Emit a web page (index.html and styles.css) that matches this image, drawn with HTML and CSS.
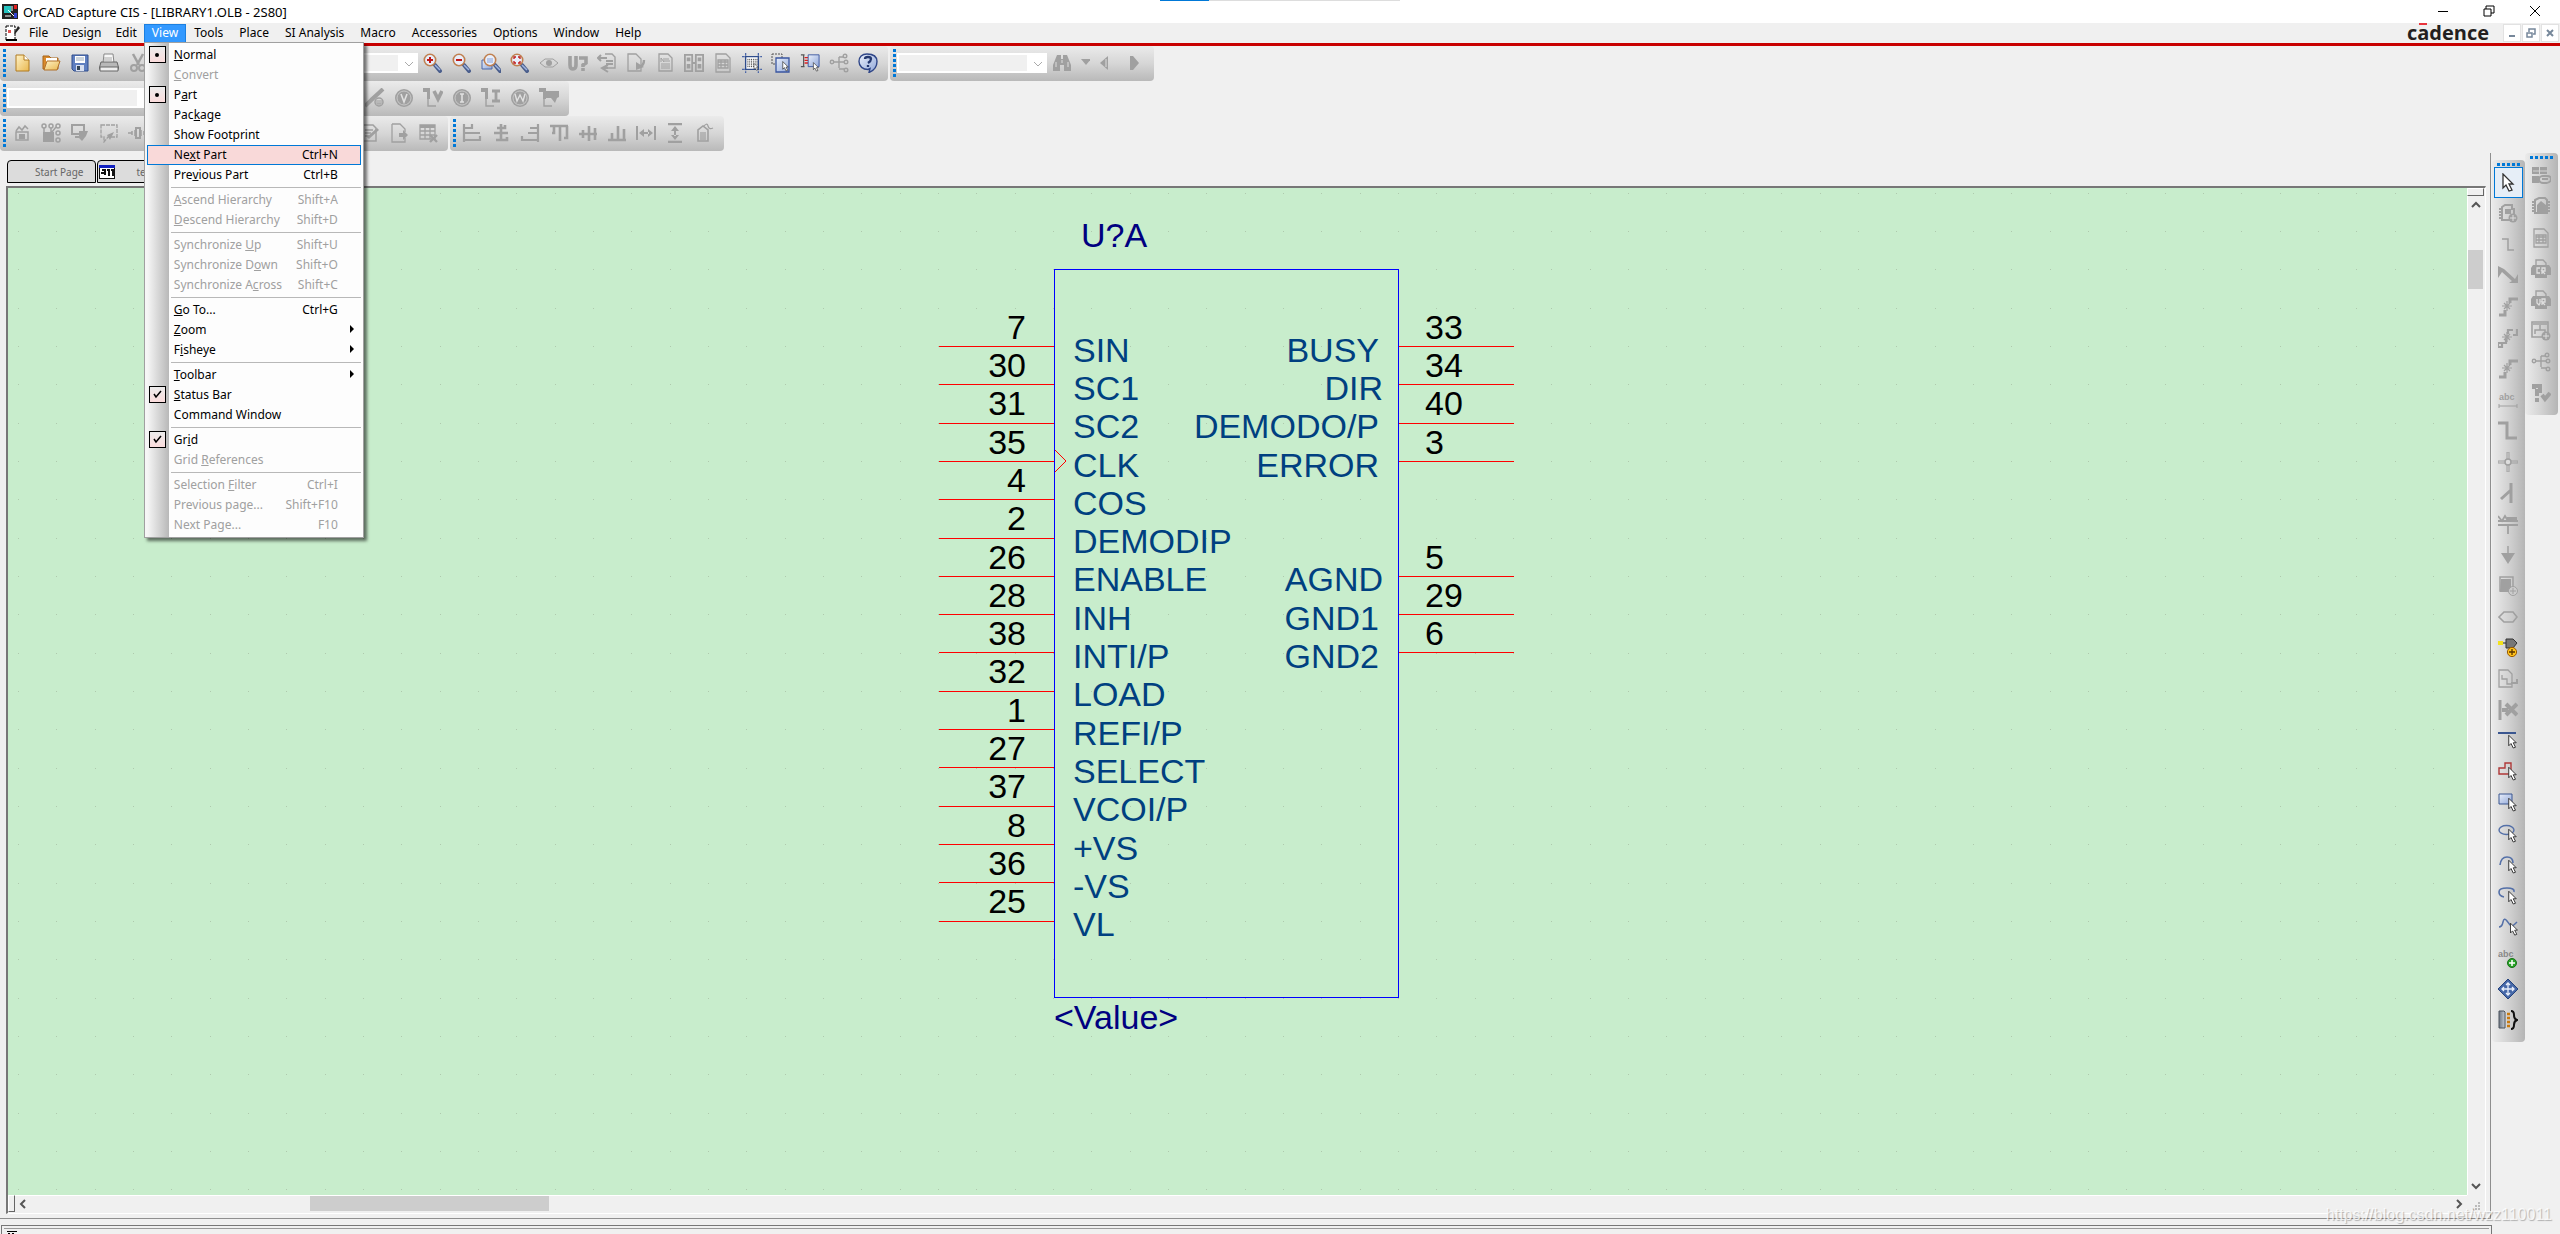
FILE: index.html
```html
<!DOCTYPE html>
<html lang="en">
<head>
<meta charset="utf-8">
<title>OrCAD Capture CIS - [LIBRARY1.OLB - 2S80]</title>
<link rel="stylesheet" href="styles.css">
</head>
<body>
<svg class="defs" aria-hidden="true">
  <defs>
    <linearGradient id="blue" x1="0" y1="0" x2="1" y2="1"><stop offset="0" stop-color="#eaf0fb"/><stop offset="1" stop-color="#8fa6d8"/></linearGradient>
    <linearGradient id="gold" x1="0" y1="0" x2="1" y2="1"><stop offset="0" stop-color="#fff3c8"/><stop offset="1" stop-color="#e9b850"/></linearGradient>
    <linearGradient id="steel" x1="0" y1="0" x2="1" y2="0"><stop offset="0" stop-color="#6f7884"/><stop offset="1" stop-color="#c4cbd3"/></linearGradient>
  </defs>
  <symbol id="cursor" viewBox="0 0 20 20"><path d="M5 1v14l3-3 3 6 3-1-3-6h4z" fill="#fff" stroke="#333" stroke-width="1.3"/></symbol>
  <symbol id="lens" viewBox="0 0 20 20"><path d="M12 12l5 6" stroke="#4a5e8c" stroke-width="4" stroke-linecap="round"/><path d="M12 12l5 5" stroke="#9fb4e0" stroke-width="1.5"/><circle cx="7" cy="7" r="5.7" fill="#e8eefa" stroke="#c08050" stroke-width="1.6"/></symbol>
  <symbol id="new" viewBox="0 0 20 20"><path d="M4 2h8l5 5v11H4z" fill="url(#gold)" stroke="#b07a20"/><path d="M12 2v5h5" fill="#fff" stroke="#b07a20"/></symbol>
  <symbol id="open" viewBox="0 0 20 20"><path d="M2 3h6l2 2h7v11H2z" fill="#d98a2c" stroke="#a86418"/><path d="M5 5h11v5H5z" fill="#fff"/><path d="M6 8h13l-3 9H3z" fill="url(#gold)" stroke="#b0702a"/></symbol>
  <symbol id="save" viewBox="0 0 20 20"><path d="M2 2h16v16H4l-2-2z" fill="#5f7fc0" stroke="#2f4d8c"/><path d="M5 3h10v7H5z" fill="#fff"/><path d="M6 5h8M6 7h8" stroke="#9ab" /><path d="M6 12h8v6H6z" fill="#d7dff0"/><path d="M7 13h3v4H7z" fill="#345"/></symbol>
  <symbol id="print" viewBox="0 0 20 20"><path d="M5 1h9l1 9H4z" fill="#f6f6f6" stroke="#888"/><path d="M2 9h16l2 7H0z" fill="#b8b8b8" stroke="#666"/><path d="M1 14h18v4H1z" fill="#eee" stroke="#666"/><path d="M5 5h8M5 7h8" stroke="#aaa"/></symbol>
  <symbol id="cut" viewBox="0 0 20 20"><path d="M5 1l6 11M15 1L9 12" stroke="currentColor" stroke-width="2.5"/><circle cx="6" cy="15" r="3" fill="none" stroke="currentColor" stroke-width="2"/><circle cx="14" cy="15" r="3" fill="none" stroke="currentColor" stroke-width="2"/></symbol>
  <symbol id="zin" viewBox="0 0 20 20"><use href="#lens"/><path d="M7 4v6M4 7h6" stroke="#c01818" stroke-width="2"/></symbol>
  <symbol id="zout" viewBox="0 0 20 20"><use href="#lens"/><path d="M4 7h6" stroke="#c01818" stroke-width="2"/></symbol>
  <symbol id="zarea" viewBox="0 0 20 20"><path d="M1 7h10v9H1z" fill="url(#blue)" stroke="#4a66a8"/><g transform="translate(2 0)"><use href="#lens" width="20" height="20"/></g><path d="M6 5h6v5H6z" fill="#b8c8ea"/></symbol>
  <symbol id="zall" viewBox="0 0 20 20"><use href="#lens"/><path d="M4 6V4h2M8 4h2v2M10 8v2H8M6 10H4V8" fill="none" stroke="#c01818" stroke-width="1.3"/></symbol>
  <symbol id="eye" viewBox="0 0 20 20"><path d="M1 10l5-4h8l5 4-5 4H6z" fill="none" stroke="currentColor"/><circle cx="10" cy="10" r="3" fill="currentColor"/></symbol>
  <symbol id="uq" viewBox="0 0 20 20"><path d="M2 3v9q0 4 3 4t3-4V3M11 5h7v5l-3 2v2M15 15v3" fill="none" stroke="currentColor" stroke-width="3.600"/></symbol>
  <symbol id="pageback" viewBox="0 0 20 20"><path d="M8 1h7l3 3v11H8" fill="none" stroke="currentColor" stroke-width="1.4"/><path d="M1 5h9M4 2L1 5l3 3M5 15h6M11 12l-6 3 6 4M9 8h7M9 11h7" fill="none" stroke="currentColor" stroke-width="2"/></symbol>
  <symbol id="pagedown" viewBox="0 0 20 20"><path d="M2 1h8l5 5v12H2z" fill="none" stroke="currentColor" stroke-width="1.3"/><path d="M18 7q0 5-4 7" fill="none" stroke="currentColor" stroke-width="2.4"/><path d="M10 9v8l8-3z" fill="currentColor"/></symbol>
  <symbol id="notes" viewBox="0 0 20 20"><path d="M4 1h9l4 4v13H4z" fill="none" stroke="currentColor" stroke-width="1.3"/><path d="M6 9V5l3 4V5M10 6h4M10 8h5M6 11h9M6 13h9M6 15h9" fill="none" stroke="currentColor"/></symbol>
  <symbol id="twins" viewBox="0 0 22 20"><path d="M1 1h8v18H1zM13 1h8v18h-8z" fill="none" stroke="currentColor" stroke-width="2"/><path d="M3 4h4v4H3zM3 11h4v5H3zM15 4h4v4h-4zM15 11h4v5h-4zM9 9h4v2H9z" fill="currentColor"/></symbol>
  <symbol id="sheet" viewBox="0 0 20 20"><path d="M3 1h10l4 4v14H3z" fill="none" stroke="currentColor" stroke-width="1.3"/><path d="M5 7h10v8H5zM5 9h10M5 12h10M8 7v8M12 7v8" fill="none" stroke="currentColor" stroke-width="1.3"/></symbol>
  <symbol id="grid" viewBox="0 0 22 22"><path d="M4 0v22M18 0v22M0 4h22M0 18h22" stroke="#4a66a8" stroke-width="1.4" stroke-dasharray="3 1"/><path d="M4 4h14v14H4z" fill="#fff" stroke="#2f4d8c" stroke-width="1.5"/><path d="M6 7h11M6 9h11M6 11h11M6 13h11M6 15h11" stroke="#111" stroke-dasharray="1 1"/><use href="#cursor" x="11" y="11" width="9" height="9"/></symbol>
  <symbol id="selarea" viewBox="0 0 20 20"><path d="M1 1h10v10H1z" fill="none" stroke="#555" stroke-dasharray="2 1"/><path d="M5 5h13v14H5z" fill="url(#blue)" stroke="#3a56a0" stroke-width="1.3"/><use href="#cursor" x="9" y="8" width="11" height="11"/></symbol>
  <symbol id="pins" viewBox="0 0 22 20"><path d="M1 1h4M4 1v13M1 14h4" fill="none" stroke="#555" stroke-width="1.3"/><path d="M5 4h4M5 7h4M5 10h4" stroke="#e02020" stroke-width="1.4"/><path d="M9 1h12v13H9z" fill="url(#blue)" stroke="#3a56a0"/><use href="#cursor" x="12" y="9" width="11" height="11"/></symbol>
  <symbol id="tree" viewBox="0 0 20 20"><path d="M4 9h6M10 4v11M10 4h4M10 9h5M10 16h5" fill="none" stroke="currentColor" stroke-width="1.4"/><g fill="none" stroke="currentColor" stroke-width="1.4"><circle cx="3" cy="9" r="1.7"/><circle cx="16" cy="3" r="1.8"/><circle cx="17" cy="9" r="1.8"/><circle cx="17" cy="17" r="1.8"/></g></symbol>
  <symbol id="help" viewBox="0 0 20 20"><path d="M9 1C4 1 1 4 1 8.500c0 5 4 8 9 8l2-1-1 4c5-2 8-6 8-11S15 1 9 1z" fill="url(#blue)" stroke="#2f4688" stroke-width="1.4"/><path d="M7 6q0-2 3-2t3 2-3 4M10 12v2" fill="none" stroke="#24386f" stroke-width="2.300"/></symbol>
  <symbol id="bino" viewBox="0 0 20 20"><path d="M5 2h4v4h2V2h4l4 10v6h-7v-6H8v6H1v-6z" fill="currentColor"/><path d="M4 9v5M16 9v5M10 7v3" stroke="#ddd"/></symbol>
  <symbol id="down" viewBox="0 0 20 20"><path d="M5 6h10l-5 6z" fill="currentColor"/></symbol>
  <symbol id="prev" viewBox="0 0 20 20"><path d="M13 3v14l-8-7z" fill="currentColor"/><path d="M11 6v8" stroke="#ddd"/></symbol>
  <symbol id="next" viewBox="0 0 20 20"><path d="M6 3h3l6 7-6 7H6z" fill="currentColor"/></symbol>
  <symbol id="probe" viewBox="0 0 20 20"><path d="M0 18L18 1M6 12l10-9" stroke="currentColor" stroke-width="4"/><circle cx="14" cy="14" r="4" fill="none" stroke="currentColor" stroke-width="1.5"/><path d="M12 12v4h4v-4M14 12v4" fill="none" stroke="currentColor"/></symbol>
  <symbol id="disc" viewBox="0 0 20 20"><circle cx="10" cy="10" r="9" fill="currentColor"/><circle cx="10" cy="10" r="7" fill="none" stroke="#c8c8c8"/></symbol>
  <symbol id="cv" viewBox="0 0 20 20"><use href="#disc"/><path d="M7 6l3 8 3-8" fill="none" stroke="#e0e0e0" stroke-width="1.6"/></symbol>
  <symbol id="ci" viewBox="0 0 20 20"><use href="#disc"/><path d="M8 6h4M10 6v8M8 14h4" fill="none" stroke="#e0e0e0" stroke-width="1.600"/></symbol>
  <symbol id="cw" viewBox="0 0 20 20"><use href="#disc"/><path d="M5 6l2 7 3-6 3 6 2-7" fill="none" stroke="#e0e0e0" stroke-width="1.4"/></symbol>
  <symbol id="pen" viewBox="0 0 20 20"><path d="M0 0h7v11H4V4H0z" fill="currentColor"/><path d="M5 11v7h8" fill="none" stroke="currentColor" stroke-width="1.400"/></symbol>
  <symbol id="pv" viewBox="0 0 20 20"><use href="#pen"/><path d="M11 3l4 8 4-8" fill="none" stroke="currentColor" stroke-width="3.600"/></symbol>
  <symbol id="pi" viewBox="0 0 20 20"><use href="#pen"/><path d="M11 3h8M15 3v10M11 13h8" fill="none" stroke="currentColor" stroke-width="2.800"/></symbol>
  <symbol id="pw" viewBox="0 0 20 20"><use href="#pen"/><path d="M7 3h13v6l-2 1-2 5-4-5H7z" fill="currentColor"/></symbol>
  <symbol id="basket" viewBox="0 0 20 20"><path d="M4 8l3-4 3 3 3-4 3 3M4 9h12v8H4z" fill="none" stroke="currentColor" stroke-width="1.5"/><path d="M7 11h6v5H7z" fill="currentColor"/></symbol>
  <symbol id="parts" viewBox="0 0 20 20"><path d="M2 9h11v10H2z" fill="currentColor"/><g fill="none" stroke="currentColor" stroke-width="1.5"><circle cx="3" cy="3" r="2"/><circle cx="10" cy="3" r="2"/><circle cx="17" cy="3" r="2"/><circle cx="17" cy="10" r="2"/><circle cx="17" cy="17" r="2"/><path d="M3 5v4M10 5v4M15 4l-4 5"/></g></symbol>
  <symbol id="board" viewBox="0 0 20 20"><path d="M2 2h12v9H2zM5 14h8" fill="none" stroke="currentColor" stroke-width="2"/><path d="M9 8h9l-2 5-4 5-3-3z" fill="currentColor"/></symbol>
  <symbol id="board2" viewBox="0 0 20 20"><path d="M2 2h16v12H9l-4 5V14H2z" fill="none" stroke="currentColor" stroke-dasharray="4 1" stroke-width="1.300"/><path d="M8 12l7-3-4 8z" fill="currentColor"/></symbol>
  <symbol id="coil" viewBox="0 0 20 20"><path d="M0 10h4M16 10h4M4 8v4M7 7v6M13 7v6M16 8v4" stroke="currentColor" stroke-width="1.5"/><path d="M8 5h4v10H8z" fill="none" stroke="currentColor" stroke-width="2"/></symbol>
  <symbol id="edit" viewBox="0 0 20 20"><path d="M3 2h10l3 3v13H3z" fill="none" stroke="currentColor" stroke-width="1.5"/><path d="M5 7h8M5 10h6M5 13h4" stroke="currentColor" stroke-width="1.5"/><path d="M8 15l10-9" stroke="currentColor" stroke-width="3"/></symbol>
  <symbol id="export" viewBox="0 0 20 20"><path d="M3 1h8l5 5v3M16 15v4H3V1" fill="none" stroke="currentColor" stroke-width="1.3"/><path d="M10 10h4V7l5 5-5 5v-3h-4z" fill="currentColor"/></symbol>
  <symbol id="tablex" viewBox="0 0 20 20"><path d="M2 2h15v14H2zM2 8h15M2 12h15M7 4v12M12 4v12" fill="none" stroke="currentColor" stroke-width="1.3"/><path d="M2 2h15v3H2z" fill="currentColor"/><path d="M12 12l7 7M19 12l-7 7" stroke="currentColor" stroke-width="2.400"/></symbol>
  <symbol id="al" viewBox="0 0 20 20"><path d="M2 1v18M2 5h8V1M2 10h16M2 17h16v-4" fill="none" stroke="currentColor" stroke-width="2.200"/></symbol>
  <symbol id="ac" viewBox="0 0 20 20"><path d="M10 1v17M6 5h8V2M3 10h14M5 17h11v-3" fill="none" stroke="currentColor" stroke-width="2.600"/></symbol>
  <symbol id="ar" viewBox="0 0 20 20"><path d="M18 1v18M18 5h-8M18 10H8M18 17H2v-4" fill="none" stroke="currentColor" stroke-width="2.200"/></symbol>
  <symbol id="at" viewBox="0 0 20 20"><path d="M1 3h18M5 3v7H3M11 3v15M18 3v12h-3" fill="none" stroke="currentColor" stroke-width="2.600"/></symbol>
  <symbol id="am" viewBox="0 0 20 20"><path d="M1 11h18M5 7v8M11 3v15M17 5v12" fill="none" stroke="currentColor" stroke-width="2.600"/></symbol>
  <symbol id="ab" viewBox="0 0 20 20"><path d="M1 17h18M5 10v7M11 3v14M17 6v11" fill="none" stroke="currentColor" stroke-width="2.600"/></symbol>
  <symbol id="dh" viewBox="0 0 20 20"><path d="M1 3v14M19 3v14" stroke="currentColor" stroke-width="2"/><path d="M3 10l5-4v8zM17 10l-5-4v8zM7 9h6v2H7z" fill="currentColor"/></symbol>
  <symbol id="dv" viewBox="0 0 20 20"><path d="M3 1h14M3 19h14" stroke="currentColor" stroke-width="2.400"/><path d="M10 3l4 5H6zM10 17l4-5H6zM9 7h2v6H9z" fill="currentColor"/></symbol>
  <symbol id="tag" viewBox="0 0 20 20"><path d="M4 18V7l5-4 5 4v11z" fill="none" stroke="currentColor" stroke-width="1.600"/><path d="M7 9v8M9 9v8M11 9v8M9 4q4-5 5-1t5 2" fill="none" stroke="currentColor" stroke-width="1.200"/></symbol>
  <symbol id="chip" viewBox="0 0 20 20"><path d="M4 3l3-2h7v4h2v11H4z" fill="none" stroke="currentColor" stroke-width="2"/><path d="M1 5h3M1 8h3M1 11h3M1 14h3" stroke="currentColor" stroke-width="2"/><path d="M7 5h6v5H7z" fill="currentColor"/><circle cx="15" cy="14" r="4.500" fill="currentColor"/><path d="M15 11v6M12 14h6" stroke="#ddd"/></symbol>
  <symbol id="chip2" viewBox="0 0 20 20"><path d="M4 3l4-2h6l2 2v13H4z" fill="none" stroke="currentColor" stroke-width="2"/><path d="M1 5h3M1 8h3M1 11h3M1 14h3M16 5h3M16 8h3M16 11h3M16 14h3" stroke="currentColor" stroke-width="2"/><path d="M6 17V8l4-4 5 4v9z" fill="currentColor"/></symbol>
  <symbol id="wire" viewBox="0 0 20 20"><path d="M4 4h6v11h6" fill="none" stroke="currentColor" stroke-width="1.5"/></symbol>
  <symbol id="bus" viewBox="0 0 20 20"><path d="M0 0v12l4-6 10 9-3 2h9V8l-3 5L6 3z" fill="currentColor"/></symbol>
  <symbol id="auto" viewBox="0 0 20 20"><path d="M12 6V2h8M1 18h6v-5" fill="none" stroke="currentColor" stroke-width="3"/><path d="M9 4v10M4 9h10M6 6l6 6M12 6l-6 6" stroke="currentColor" stroke-width="1.200"/></symbol>
  <symbol id="auto2" viewBox="0 0 20 20"><path d="M10 6V2h5M15 7h4V1M0 19h4v-4H0zM5 15h3v-4" fill="none" stroke="currentColor" stroke-width="2.200"/><path d="M9 4v10M4 9h10M6 6l6 6M12 6l-6 6" stroke="currentColor" stroke-width="1.200"/></symbol>
  <symbol id="busent" viewBox="0 0 20 20"><path d="M0 2h9v15h10" fill="none" stroke="currentColor" stroke-width="3"/></symbol>
  <symbol id="junction" viewBox="0 0 20 20"><path d="M9 0h2v20H9zM0 9h20v2H0z" fill="none" stroke="currentColor"/><circle cx="10" cy="10" r="3" fill="#ddd" stroke="currentColor" stroke-width="1.5"/></symbol>
  <symbol id="entry" viewBox="0 0 20 20"><path d="M13 0v20M3 16l10-9" stroke="currentColor" stroke-width="3"/></symbol>
  <symbol id="vcc" viewBox="0 0 20 20"><path d="M0 2l4 5 3-5 3 5M0 11h20M10 10v10M0 7h20" fill="none" stroke="currentColor" stroke-width="1.800"/><path d="M9 3h10v5H9z" fill="currentColor"/></symbol>
  <symbol id="gnd" viewBox="0 0 20 20"><path d="M10 1v8" stroke="currentColor" stroke-width="1.500"/><path d="M3 8h14l-7 11z" fill="currentColor"/></symbol>
  <symbol id="block" viewBox="0 0 20 20"><path d="M2 1h13v14H2z" fill="none" stroke="currentColor" stroke-width="1.500"/><path d="M3 3h10v13H2z" fill="currentColor"/><circle cx="15" cy="15" r="4.500" fill="#ccc" stroke="currentColor"/><path d="M15 12v6M12 15h6" stroke="currentColor"/></symbol>
  <symbol id="port" viewBox="0 0 20 20"><path d="M1 10l5-5h9l4 5-4 5H6z" fill="none" stroke="currentColor" stroke-width="1.600"/></symbol>
  <symbol id="gate" viewBox="0 0 20 20"><path d="M0 3h5v4H0z" fill="#f2e21c"/><path d="M5 5h3" stroke="#222"/><path d="M8 1h7l4 4-4 5H8z" fill="#777" stroke="#333"/><circle cx="14" cy="14" r="4.600" fill="#ffc21a" stroke="#9a5a00"/><path d="M14 11v6M11 14h6" stroke="#5a3400" stroke-width="1.300"/></symbol>
  <symbol id="offpage" viewBox="0 0 20 20"><path d="M1 1h9l4 4v13H1zM4 6v4h5v5h5" fill="none" stroke="currentColor" stroke-width="1.300"/><path d="M13 14h6v-4" fill="none" stroke="currentColor" stroke-width="2"/></symbol>
  <symbol id="nc" viewBox="0 0 20 20"><path d="M2 0v20" stroke="currentColor" stroke-width="3"/><path d="M4 10h6M8 4l11 11M19 4L8 15" stroke="currentColor" stroke-width="4"/></symbol>
  <symbol id="gline" viewBox="0 0 20 20"><path d="M0 1h18v2H0z" fill="#3a5690"/><use href="#cursor" x="7" y="3" width="15" height="16"/></symbol>
  <symbol id="gpoly" viewBox="0 0 20 20"><path d="M1 12V6h6V1h6v11z" fill="none" stroke="#b03838" stroke-width="1.400"/><use href="#cursor" x="7" y="4" width="15" height="16"/></symbol>
  <symbol id="grect" viewBox="0 0 20 20"><path d="M1 1h13v10H1z" fill="url(#blue)" stroke="#3a5690"/><use href="#cursor" x="7" y="4" width="15" height="16"/></symbol>
  <symbol id="gell" viewBox="0 0 20 20"><ellipse cx="8.500" cy="6" rx="7.500" ry="4.500" fill="none" stroke="#5470a8" stroke-width="1.400"/><use href="#cursor" x="7" y="4" width="15" height="16"/></symbol>
  <symbol id="garc" viewBox="0 0 20 20"><path d="M2 10Q3 2 9 2t6 6" fill="none" stroke="#5470a8" stroke-width="1.600"/><use href="#cursor" x="7" y="4" width="15" height="16"/></symbol>
  <symbol id="gearc" viewBox="0 0 20 20"><path d="M6 11Q1 10 1 6t8-4 7 4" fill="none" stroke="#5470a8" stroke-width="1.600"/><use href="#cursor" x="7" y="4" width="15" height="16"/></symbol>
  <symbol id="gbez" viewBox="0 0 20 20"><path d="M1 10q3 0 4-5t4-1 4 5 6-4" fill="none" stroke="#5470a8" stroke-width="1.500"/><use href="#cursor" x="9" y="5" width="14" height="15"/></symbol>
  <symbol id="gmove" viewBox="0 0 20 20"><path d="M10 0l10 10-10 10L0 10z" fill="#4668a8" stroke="#24427c"/><path d="M10 4v12M4 10h12M8 6l2-2 2 2M8 14l2 2 2-2M6 8l-2 2 2 2M14 8l2 2-2 2" fill="none" stroke="#e8eefa" stroke-width="1.300"/></symbol>
  <symbol id="garray" viewBox="0 0 20 20"><path d="M1 1h5l1 1v16H1z" fill="url(#steel)" stroke="#4a525c"/><path d="M9 4h3M9 8h3M9 12h3M9 16h3" stroke="#c87a10" stroke-width="2.500"/><path d="M13 1q3 0 3 4t3 5q-3 1-3 5t-3 4" fill="none" stroke="#111" stroke-width="2"/></symbol>
  <symbol id="link" viewBox="0 0 20 20"><path d="M1 1h7v7H1zM9 1h7v7H9zM1 10h7v7H1z" fill="currentColor"/><path d="M2 5h14" stroke="#d4d4d4"/><path d="M8 13q0-3 4-3h4q4 0 4 3t-4 4h-4q-4 0-4-4zM11 13h6" fill="none" stroke="currentColor" stroke-width="1.800"/></symbol>
  <symbol id="prn" viewBox="0 0 20 20"><path d="M5 7V1h7l3 3v3" fill="none" stroke="currentColor" stroke-width="1.400"/><path d="M2 6h16l2 3v7h-4v3H4v-3H0V9z" fill="currentColor"/></symbol>
  <symbol id="cr" viewBox="0 0 20 20"><use href="#prn"/><path d="M9 9H6v5h3M11 15V9h3v3h-3l3 3" fill="none" stroke="#dedede" stroke-width="1.300"/></symbol>
  <symbol id="vr" viewBox="0 0 20 20"><use href="#prn"/><path d="M6 9v4l2 2 1-2V9M11 15V9h3v3h-3l3 3" fill="none" stroke="#dedede" stroke-width="1.300"/></symbol>
  <symbol id="hier" viewBox="0 0 20 20"><path d="M1 1h16v15H1z" fill="none" stroke="currentColor" stroke-width="1.600"/><path d="M9 4v5M4 13V9h10v3M2 3h14" fill="none" stroke="currentColor" stroke-width="1.500"/><circle cx="15" cy="15" r="4.500" fill="currentColor"/><path d="M15 12v6M12 15h6" stroke="#ddd"/></symbol>
  <symbol id="qcheck" viewBox="0 0 20 20"><path d="M3 6V3h6v5H6v5M6 15v4" fill="none" stroke="currentColor" stroke-width="4"/><path d="M11 12l3 4 5-6" fill="none" stroke="currentColor" stroke-width="4"/></symbol>
</svg>

<header class="titlebar">
  <svg class="app-icon" width="16" height="15" viewBox="0 0 16 15"><path d="M0 0h16v15H0z" fill="#222"/><path d="M2 2h7v7H2z" fill="#26c4c0"/><path d="M12 1h3v4h-3z" fill="#e02020"/><path d="M12 9h3v5h-3z" fill="#3344d0"/><path d="M6 6l6 6M3 12h6M10 2v5" stroke="#fff"/></svg>
  <h1>OrCAD Capture CIS - [LIBRARY1.OLB - 2S80]</h1>
  <div class="snap-hint"></div>
  <div class="win-buttons">
    <button aria-label="Minimize"><svg width="12" height="12"><path d="M1 6h10v1H1z"/></svg></button>
    <button aria-label="Restore"><svg width="12" height="12" viewBox="0 0 12 12"><path d="M1 4h7v7H1zM3 4V1h8v7H8" fill="none" stroke="#000"/></svg></button>
    <button aria-label="Close"><svg width="12" height="12" viewBox="0 0 12 12"><path d="M1 1l10 10M11 1L1 11" stroke="#000"/></svg></button>
  </div>
</header>

<nav class="menubar">
  <svg class="doc-icon" width="18" height="18" viewBox="0 0 18 18"><path d="M2 2h9v14H2z" fill="#fff" stroke="#000" stroke-dasharray="3 1"/><path d="M4 6h3v3H4z" fill="#e05050"/><path d="M10 9l4-7 2 2-5 6z" fill="#222"/><path d="M2 16h11" stroke="#000" stroke-width="2"/></svg>
  <button>File</button><button>Design</button><button>Edit</button>
  <div class="menu-host">
    <button class="wide active">View</button>
    <div class="menu" role="menu">
      <button class="item"><span class="mark"><i></i></span><span><u>N</u>ormal</span></button>
      <button class="item" disabled><span><u>C</u>onvert</span></button>
      <button class="item"><span class="mark"><i></i></span><span>P<u>a</u>rt</span></button>
      <button class="item"><span>Pac<u>k</u>age</span></button>
      <button class="item"><span>Show Footprint</span></button>
      <button class="item hot"><span>Ne<u>x</u>t Part</span><kbd>Ctrl+N</kbd></button>
      <button class="item"><span>Pre<u>v</u>ious Part</span><kbd>Ctrl+B</kbd></button>
      <hr>
      <button class="item" disabled><span><u>A</u>scend Hierarchy</span><kbd>Shift+A</kbd></button>
      <button class="item" disabled><span><u>D</u>escend Hierarchy</span><kbd>Shift+D</kbd></button>
      <hr>
      <button class="item" disabled><span>Synchronize <u>U</u>p</span><kbd>Shift+U</kbd></button>
      <button class="item" disabled><span>Synchronize D<u>o</u>wn</span><kbd>Shift+O</kbd></button>
      <button class="item" disabled><span>Synchronize A<u>c</u>ross</span><kbd>Shift+C</kbd></button>
      <hr>
      <button class="item"><span><u>G</u>o To...</span><kbd>Ctrl+G</kbd></button>
      <button class="item sub"><span><u>Z</u>oom</span></button>
      <button class="item sub"><span>F<u>i</u>sheye</span></button>
      <hr>
      <button class="item sub"><span><u>T</u>oolbar</span></button>
      <button class="item"><span class="mark"><svg width="9" height="9"><path d="M1 4l2 3 5-6" fill="none" stroke="#000" stroke-width="1.500"/></svg></span><span><u>S</u>tatus Bar</span></button>
      <button class="item"><span>Command Window</span></button>
      <hr>
      <button class="item"><span class="mark"><svg width="9" height="9"><path d="M1 4l2 3 5-6" fill="none" stroke="#000" stroke-width="1.500"/></svg></span><span>Gr<u>i</u>d</span></button>
      <button class="item" disabled><span>Grid <u>R</u>eferences</span></button>
      <hr>
      <button class="item" disabled><span>Selection <u>F</u>ilter</span><kbd>Ctrl+I</kbd></button>
      <button class="item" disabled><span>Previous page...</span><kbd>Shift+F10</kbd></button>
      <button class="item" disabled><span>Next Page...</span><kbd>F10</kbd></button>
    </div>
  </div>
  <button class="wide">Tools</button><button class="wide">Place</button><button class="wide">SI Analysis</button><button class="wide">Macro</button><button class="wide">Accessories</button><button class="wide">Options</button><button class="wide">Window</button><button class="wide">Help</button>
  <div class="brand">c<span class="brand-a">a</span>dence</div>
  <div class="mdi-buttons">
    <button aria-label="Minimize document"><svg width="10" height="10"><path d="M2 7h6v2H2z"/></svg></button>
    <button aria-label="Restore document"><svg width="10" height="10"><path d="M1 5h5v4H1zM3 4V1h6v5H7" fill="none" stroke="#76879a" stroke-width="1.500"/></svg></button>
    <button aria-label="Close document"><svg width="10" height="10"><path d="M2 2l6 6M8 2L2 8" stroke="#76879a" stroke-width="2"/></svg></button>
  </div>
</nav>

<section class="toolbars">
  <div class="row">
    <div class="bar">
      <i class="grip"></i>
      <button class="tool"><svg><use href="#new"/></svg></button><button class="tool"><svg><use href="#open"/></svg></button><button class="tool"><svg><use href="#save"/></svg></button><button class="tool"><svg><use href="#print"/></svg></button><button class="tool" disabled><svg><use href="#cut"/></svg></button>
      <span class="gap-edit"></span>
      <span class="combo"><select aria-label="Recent parts"><option></option></select><svg width="10" height="6"><path d="M1 1l4 4 4-4" fill="none" stroke="#aaa"/></svg></span>
      <button class="tool"><svg><use href="#zin"/></svg></button><button class="tool"><svg><use href="#zout"/></svg></button><button class="tool"><svg><use href="#zarea"/></svg></button><button class="tool"><svg><use href="#zall"/></svg></button><button class="tool" disabled><svg><use href="#eye"/></svg></button><button class="tool" disabled><svg><use href="#uq"/></svg></button><button class="tool" disabled><svg><use href="#pageback"/></svg></button><button class="tool" disabled><svg><use href="#pagedown"/></svg></button><button class="tool" disabled><svg><use href="#notes"/></svg></button><button class="tool" disabled><svg><use href="#twins"/></svg></button><button class="tool" disabled><svg><use href="#sheet"/></svg></button><button class="tool"><svg><use href="#grid"/></svg></button><button class="tool"><svg><use href="#selarea"/></svg></button><button class="tool"><svg><use href="#pins"/></svg></button><button class="tool" disabled><svg><use href="#tree"/></svg></button><button class="tool"><svg><use href="#help"/></svg></button>
    </div>
    <div class="bar">
      <i class="grip"></i>
      <span class="combo"><select aria-label="Search text"><option></option></select><svg width="10" height="6"><path d="M1 1l4 4 4-4" fill="none" stroke="#aaa"/></svg></span>
      <button class="tool" disabled><svg><use href="#bino"/></svg></button><button class="tool slim" disabled><svg><use href="#down"/></svg></button><button class="tool" disabled><svg><use href="#prev"/></svg></button><button class="tool" disabled><svg><use href="#next"/></svg></button>
    </div>
  </div>
  <div class="row">
    <div class="bar">
      <i class="grip"></i>
      <span class="combo"><select aria-label="Simulation profile"><option></option></select><svg width="10" height="6"><path d="M1 1l4 4 4-4" fill="none" stroke="#aaa"/></svg></span>
      <span class="gap-sim"></span>
      <button class="tool" disabled><svg><use href="#probe"/></svg></button><button class="tool" disabled><svg><use href="#cv"/></svg></button><button class="tool" disabled><svg><use href="#pv"/></svg></button><button class="tool" disabled><svg><use href="#ci"/></svg></button><button class="tool" disabled><svg><use href="#pi"/></svg></button><button class="tool" disabled><svg><use href="#cw"/></svg></button><button class="tool" disabled><svg><use href="#pw"/></svg></button>
    </div>
  </div>
  <div class="row">
    <div class="bar">
      <i class="grip"></i>
      <button class="tool" disabled><svg><use href="#basket"/></svg></button><button class="tool" disabled><svg><use href="#parts"/></svg></button><button class="tool" disabled><svg><use href="#board"/></svg></button><button class="tool" disabled><svg><use href="#board2"/></svg></button><button class="tool" disabled><svg><use href="#coil"/></svg></button>
      <span class="gap-pcb"></span>
      <button class="tool" disabled><svg><use href="#edit"/></svg></button><button class="tool" disabled><svg><use href="#export"/></svg></button><button class="tool" disabled><svg><use href="#tablex"/></svg></button>
    </div>
    <div class="bar">
      <i class="grip"></i>
      <button class="tool" disabled><svg><use href="#al"/></svg></button><button class="tool" disabled><svg><use href="#ac"/></svg></button><button class="tool" disabled><svg><use href="#ar"/></svg></button><button class="tool" disabled><svg><use href="#at"/></svg></button><button class="tool" disabled><svg><use href="#am"/></svg></button><button class="tool" disabled><svg><use href="#ab"/></svg></button><button class="tool" disabled><svg><use href="#dh"/></svg></button><button class="tool" disabled><svg><use href="#dv"/></svg></button><button class="tool" disabled><svg><use href="#tag"/></svg></button>
    </div>
  </div>
</section>

<main class="main">
  <div class="documents">
    <section class="child">
      <div class="tabs">
        <button class="tab">Start Page</button>
        <button class="tab"><svg width="16" height="14" viewBox="0 0 16 14"><path d="M0 0h16v14H0z" fill="#111"/><path d="M1 3h14v10H1z" fill="#fff"/><path d="M0 0h16v3H0z" fill="#1020c0"/><path d="M3 5h3v5M8 5h2v6M12 5h2v6M2 8h5" fill="none" stroke="#111" stroke-width="2"/></svg>template</button>
      </div>
      <div class="frame">
        <svg class="canvas" role="img" aria-label="Part 2S80, U?A">
          <defs><pattern id="dots" width="115" height="115" patternUnits="userSpaceOnUse"><path d="M10 5h1v1h-1zM48 5h1v1h-1zM87 5h1v1h-1zM10 43h1v1h-1zM48 43h1v1h-1zM87 43h1v1h-1zM10 81h1v1h-1zM48 81h1v1h-1zM87 81h1v1h-1z" fill="#afc9ad"/></pattern></defs>
          <rect width="100%" height="100%" fill="url(#dots)"/>
          <path class="body" d="M1046 81h345v729h-345zM1047 82v727h343V82z"/>
          <path class="wire" d="M931 158h115v1h-115zM931 196h115v1h-115zM931 235h115v1h-115zM931 273h115v1h-115zM931 311h115v1h-115zM931 350h115v1h-115zM931 388h115v1h-115zM931 426h115v1h-115zM931 464h115v1h-115zM931 503h115v1h-115zM931 541h115v1h-115zM931 579h115v1h-115zM931 618h115v1h-115zM931 656h115v1h-115zM931 694h115v1h-115zM931 733h115v1h-115z"/>
          <path class="wire" d="M1391 158h115v1h-115zM1391 196h115v1h-115zM1391 235h115v1h-115zM1391 273h115v1h-115zM1391 388h115v1h-115zM1391 426h115v1h-115zM1391 464h115v1h-115z"/>
          <path class="clock" d="M1047 262l11 11-11 11"/>
          <g class="ref"><text x="1073" y="59">U?A</text><text x="1046" y="841">&lt;Value&gt;</text></g>
          <g class="num end">
            <text x="1018" y="151">7</text><text x="1018" y="189">30</text><text x="1018" y="227">31</text><text x="1018" y="266">35</text><text x="1018" y="304">4</text><text x="1018" y="342">2</text><text x="1018" y="381">26</text><text x="1018" y="419">28</text><text x="1018" y="457">38</text><text x="1018" y="495">32</text><text x="1018" y="534">1</text><text x="1018" y="572">27</text><text x="1018" y="610">37</text><text x="1018" y="649">8</text><text x="1018" y="687">36</text><text x="1018" y="725">25</text>
          </g>
          <g class="num">
            <text x="1417" y="151">33</text><text x="1417" y="189">34</text><text x="1417" y="227">40</text><text x="1417" y="266">3</text><text x="1417" y="381">5</text><text x="1417" y="419">29</text><text x="1417" y="457">6</text>
          </g>
          <g class="name">
            <text x="1065" y="174">SIN</text><text x="1065" y="212">SC1</text><text x="1065" y="250">SC2</text><text x="1065" y="289">CLK</text><text x="1065" y="327">COS</text><text x="1065" y="365">DEMODIP</text><text x="1065" y="403">ENABLE</text><text x="1065" y="442">INH</text><text x="1065" y="480">INTI/P</text><text x="1065" y="518">LOAD</text><text x="1065" y="557">REFI/P</text><text x="1065" y="595">SELECT</text><text x="1065" y="633">VCOI/P</text><text x="1065" y="672">+VS</text><text x="1065" y="710">-VS</text><text x="1065" y="748">VL</text>
          </g>
          <g class="name end">
            <text x="1371" y="174">BUSY</text><text x="1375" y="212">DIR</text><text x="1371" y="250">DEMODO/P</text><text x="1371" y="289">ERROR</text><text x="1375" y="403">AGND</text><text x="1371" y="442">GND1</text><text x="1371" y="480">GND2</text>
          </g>
        </svg>
        <div class="vscroll">
          <i class="split"></i>
          <svg width="10" height="8"><path d="M1 7l4-4 4 4" fill="none" stroke="#555" stroke-width="2"/></svg>
          <i class="thumb"></i>
          <svg width="10" height="8"><path d="M1 1l4 4 4-4" fill="none" stroke="#555" stroke-width="2"/></svg>
        </div>
        <div class="hscroll">
          <i class="split"></i>
          <svg width="8" height="10"><path d="M6 1L2 5l4 4" fill="none" stroke="#555" stroke-width="2"/></svg>
          <i class="thumb"></i>
          <svg width="8" height="10"><path d="M1 1l4 4-4 4" fill="none" stroke="#555" stroke-width="2"/></svg>
        </div>
        <svg class="size-grip" width="10" height="10"><path d="M7 1h2v2H7zM7 4h2v2H7zM4 4h2v2H4zM7 7h2v2H7zM4 7h2v2H4zM1 7h2v2H1z" fill="#bbb"/></svg>
      </div>
    </section>
    <section class="session"><div><svg width="10" height="4"><path d="M0 0h10v1H0zM1 2h2v2H1zM5 2h2v2H5z"/></svg></div></section>
  </div>
  <aside class="dock">
    <div class="vbar draw">
      <i class="grip"></i>
      <button class="tool on"><svg><use href="#cursor"/></svg></button>
      <button class="tool" disabled><svg><use href="#chip"/></svg></button>
      <button class="tool" disabled><svg><use href="#wire"/></svg></button>
      <button class="tool" disabled><svg><use href="#bus"/></svg></button>
      <button class="tool" disabled><svg><use href="#auto"/></svg></button>
      <button class="tool" disabled><svg><use href="#auto2"/></svg></button>
      <button class="tool" disabled><svg><use href="#auto"/></svg></button>
      <button class="tool" disabled><svg><path d="M1 16h18M1 14v4M19 14v4" stroke="currentColor"/><text x="1" y="10" class="glyph">abc</text></svg></button>
      <button class="tool" disabled><svg><use href="#busent"/></svg></button>
      <button class="tool" disabled><svg><use href="#junction"/></svg></button>
      <button class="tool" disabled><svg><use href="#entry"/></svg></button>
      <button class="tool" disabled><svg><use href="#vcc"/></svg></button>
      <button class="tool" disabled><svg><use href="#gnd"/></svg></button>
      <button class="tool" disabled><svg><use href="#block"/></svg></button>
      <button class="tool" disabled><svg><use href="#port"/></svg></button>
      <button class="tool"><svg><use href="#gate"/></svg></button>
      <button class="tool" disabled><svg><use href="#offpage"/></svg></button>
      <button class="tool" disabled><svg><use href="#nc"/></svg></button>
      <button class="tool"><svg><use href="#gline"/></svg></button>
      <button class="tool"><svg><use href="#gpoly"/></svg></button>
      <button class="tool"><svg><use href="#grect"/></svg></button>
      <button class="tool"><svg><use href="#gell"/></svg></button>
      <button class="tool"><svg><use href="#garc"/></svg></button>
      <button class="tool"><svg><use href="#gearc"/></svg></button>
      <button class="tool"><svg><use href="#gbez"/></svg></button>
      <button class="tool"><svg><text x="0" y="9" class="glyph glyph-dark">abc</text><circle cx="14" cy="15" r="4.500" fill="#28a428" stroke="#177017"/><path d="M14 12v6M11 15h6" stroke="#fff" stroke-width="1.500"/></svg></button>
      <button class="tool"><svg><use href="#gmove"/></svg></button>
      <button class="tool"><svg><use href="#garray"/></svg></button>
    </div>
    <div class="vbar">
      <i class="grip"></i>
      <button class="tool" disabled><svg><use href="#link"/></svg></button>
      <button class="tool" disabled><svg><use href="#chip2"/></svg></button>
      <button class="tool" disabled><svg><use href="#sheet"/></svg></button>
      <button class="tool" disabled><svg><use href="#cr"/></svg></button>
      <button class="tool" disabled><svg><use href="#vr"/></svg></button>
      <button class="tool" disabled><svg><use href="#hier"/></svg></button>
      <button class="tool" disabled><svg><use href="#tree"/></svg></button>
      <button class="tool" disabled><svg><use href="#qcheck"/></svg></button>
    </div>
  </aside>
</main>
<div class="watermark">https://blog.csdn.net/wzz110011</div>
</body>
</html>
```
FILE: styles.css
```css
* { box-sizing: border-box; }

body {
  margin: 0;
  height: 100vh;
  display: flex;
  flex-direction: column;
  overflow: hidden;
  position: relative;
  background: #f0f0f0;
  color: #000;
  font: 12px/20px "Noto Sans", "Open Sans", sans-serif;
}

button {
  margin: 0;
  padding: 0;
  border: 0;
  background: none;
  font: inherit;
  color: inherit;
}

svg { display: block; flex: none; }
.defs { position: absolute; width: 0; height: 0; }
.glyph { font: bold 9px "Liberation Sans", sans-serif; fill: currentColor; }
.glyph-dark { fill: #888; }

/* Title bar */
.titlebar {
  height: 23px;
  flex: none;
  display: flex;
  align-items: center;
  background: #fff;
  padding: 0 2px;
}
.titlebar h1 { margin: 0 0 0 5px; font-size: 13px; font-weight: 400; flex: 1; }
.snap-hint {
  position: absolute;
  top: 0;
  left: 1160px;
  width: 240px;
  height: 1px;
  background: linear-gradient(90deg, #0078d7 49px, #ddd 49px);
}
.win-buttons { display: flex; }
.win-buttons button { width: 46px; height: 23px; display: grid; place-items: center; }
.win-buttons button { padding-bottom: 2px; }

/* Menu bar */
.menubar {
  height: 23px;
  flex: none;
  display: flex;
  border-bottom: 3px solid #c80000;
  padding-left: 4px;
}
.doc-icon { margin: 1px 0 0; }
.menubar > button, .menu-host > button { padding: 0 7px; height: 19px; line-height: 18px; }
.menubar .wide { padding: 0 8px; }
.menu-host { position: relative; }
.menu-host > .active { background: #3399ff; color: #fff; outline: 1px solid #1c80e0; outline-offset: -1px; }
.brand {
  margin-left: auto;
  margin-right: 14px;
  font: bold 20px/20px "Open Sans", "Noto Sans", sans-serif;
  color: #231f20;
}
.brand-a { position: relative; }
.brand-a::before {
  content: "";
  position: absolute;
  left: 2px;
  top: 4px;
  width: 8px;
  height: 2px;
  background: #e8343c;
}
.mdi-buttons { display: flex; gap: 1px; padding: 1px 1px 0 0; }
.mdi-buttons button {
  width: 18px;
  height: 18px;
  display: grid;
  place-items: center;
  background: #fff;
  border: 1px solid #e2e2e2;
  fill: #76879a;
}

/* Drop-down menu */
.menu {
  position: absolute;
  z-index: 5;
  left: 0;
  top: 19px;
  width: 220px;
  padding: 2px;
  border: 1px solid #a0a0a0;
  background:
    linear-gradient(90deg, #f6f6f6 2px, #f4f4f4 3px, #b8b8b8 24px, #fdfdfd 24px) no-repeat;
  box-shadow: 3px 3px 3px #0008;
}
.item {
  display: flex;
  position: relative;
  width: 214px;
  height: 20px;
  padding: 0 22px 0 26px;
  line-height: 19px;
  border: 1px solid transparent;
  justify-content: space-between;
  margin: 0;
}
.item:disabled { color: #a0a0a0; }
.item span, .item kbd { margin-top: -1px; }
.item kbd { font: inherit; }
.item u { text-underline-offset: 1px; }
.hot { background: #f9d9d9; border-color: #0078d7; }
.item .mark {
  position: absolute;
  left: 1px;
  top: 1px;
  width: 17px;
  height: 17px;
  border: 1px solid #000;
  background: linear-gradient(#ececec, #fbdcdc);
  display: grid;
  place-items: center;
}
.mark i { width: 4px; height: 4px; border-radius: 2px; background: #000; }
.menu hr { height: 1px; margin: 2px 0 2px 24px; border: 0; background: #b8b8b8; }
.sub::after {
  content: "";
  position: absolute;
  right: 6px;
  top: 4px;
  border: 4px solid transparent;
  border-left-color: #000;
  border-right-width: 0;
}

/* Toolbars */
.toolbars { flex: none; }
.row { display: flex; gap: 2px; height: 35px; }
.bar {
  display: flex;
  align-items: center;
  height: 35px;
  padding: 0 6px 2px 3px;
  border-radius: 4px;
  background: linear-gradient(#ebebeb, #d6d6d6 50%, #b9b9b9);
}
.grip {
  width: 3px;
  height: 28px;
  margin-right: 1px;
  background: repeating-linear-gradient(#0078d7 0 3px, transparent 3px 5px);
}
.tool { width: 29px; height: 31px; display: grid; place-items: center; color: #a0a0a0; flex: none; }
.tool svg { width: 20px; height: 20px; }
.tool.slim { width: 14px; overflow: hidden; }
.gap-edit { width: 116px; }
.gap-sim { width: 203px; }
.gap-pcb { width: 203px; }
.combo { position: relative; width: 150px; height: 20px; }
.combo select {
  appearance: none;
  width: 150px;
  height: 20px;
  margin: 0;
  display: block;
  border: 2px solid #fff;
  border-right-width: 20px;
  border-radius: 0;
  background: #f0f0f0;
}
.combo svg { position: absolute; right: 4px; top: 8px; }

/* Document area */
.main { flex: 1; display: flex; min-height: 0; margin-top: 2px; }
.documents { flex: 1; min-width: 0; display: flex; flex-direction: column; }
.child {
  flex: 1;
  min-height: 0;
  display: flex;
  flex-direction: column;
  margin-right: 1px;
  padding: 7px 4px 4px 6px;
  border: solid #8f8f8f;
  border-width: 0 1px 1px 0;
}
.tabs { display: flex; gap: 1px; height: 26px; padding-left: 1px; flex: none; }
.tab {
  display: flex;
  align-items: center;
  gap: 22px;
  height: 23px;
  padding: 0 11px 0 27px;
  border: 1px solid #000;
  border-radius: 4px 4px 0 0;
  background: #dcdcdc;
  color: #666;
  font-size: 10px;
}
.tab + .tab { padding-left: 1px; }
.frame {
  flex: 1;
  min-height: 0;
  display: grid;
  grid-template: minmax(0, 1fr) 18px / minmax(0, 1fr) 18px;
  border: 2px solid #fff;
  border-width: 2px 1px 1px 2px;
  border-top-color: #777;
  border-left-color: #777;
}
.canvas { width: 100%; height: 100%; background: #c8edcc; }
.canvas text { font: 34px "Liberation Sans", Arial, sans-serif; }
.body { fill: #0000ff; fill-rule: evenodd; }
.wire { fill: #ff0000; }
.clock { fill: none; stroke: #ff0000; }
.ref { fill: #000080; }
.name { fill: #004080; }
.end { text-anchor: end; }

.vscroll, .hscroll { display: flex; align-items: center; }
.vscroll { flex-direction: column; border-left: 1px solid #fff; padding: 0 2px 4px 0; }
.vscroll .split { width: 17px; height: 8px; }
.split {
  background: #f0f0f0;
  border: 1px solid #666;
  border-top-color: #fff;
  border-left-color: #fff;
}
.vscroll svg { margin-top: 4px; }
.vscroll .thumb { width: 15px; height: 39px; margin: 42px 0 auto; background: #cdcdcd; }
.hscroll { border-top: 1px solid #fff; padding-bottom: 2px; }
.hscroll .split { width: 7px; height: 17px; }
.hscroll svg { margin-left: 4px; }
.hscroll .thumb { width: 239px; height: 15px; margin: 0 auto 0 283px; background: #cdcdcd; }
.hscroll svg:last-child { margin-right: 3px; }
.size-grip { align-self: end; justify-self: center; margin-bottom: 2px; }

/* Session log, mostly below the window edge */
.session {
  flex: none;
  height: 9px;
  margin: 6px 0 0 1px;
  padding: 2px;
  border: 1px solid #777;
  border-bottom: 0;
}
.session div { height: 6px; padding: 2px 0 0 3px; border-top: 1px solid #999; }

/* Docked tool palettes */
.dock { width: 68px; flex: none; display: flex; align-items: flex-start; gap: 0; }
.vbar {
  width: 33px;
  display: flex;
  flex-direction: column;
  align-items: center;
  padding: 2px 0 7px;
  border-radius: 4px;
  background: linear-gradient(90deg, #ebebeb, #d2d2d2 50%, #b5b5b5);
}
.vbar.draw { margin-top: 7px; }
.vbar .grip {
  width: 23px;
  height: 3px;
  margin: 1px 0;
  background: repeating-linear-gradient(90deg, #0078d7 0 3px, transparent 3px 5px);
}
.vbar .tool { padding-right: 1px; }
.tool.on { background: #e6eef7; border: 1px solid #0078d7; }

.watermark {
  position: absolute;
  right: 8px;
  bottom: 8px;
  font: 16px/22px "Liberation Sans", Arial, sans-serif;
  color: #fffc;
  text-shadow: 1px 1px 1px #0004;
}
```
